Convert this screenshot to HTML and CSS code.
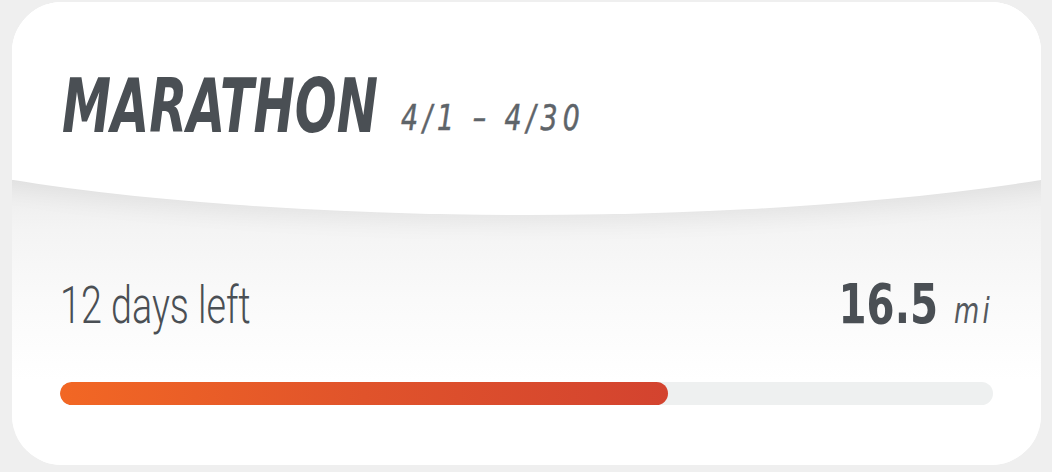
FILE: index.html
```html
<!DOCTYPE html>
<html lang="en">
<head>
<meta charset="utf-8">
<title>Marathon challenge</title>
<link rel="stylesheet" href="styles.css">
</head>
<body>
  <section class="card">
    <header class="card-head">
      <h1 class="title-row">
        <span class="title">MARATHON</span>
        <span class="dates">4/1 – 4/30</span>
      </h1>
    </header>
    <div class="card-body">
      <div class="stats">
        <span class="left">12 days left</span>
        <span class="dist"><span class="num">16.5</span><span class="unit">mi</span></span>
      </div>
      <div class="track"><div class="fill" style="width:65.2%"></div></div>
    </div>
  </section>
</body>
</html>
```
FILE: styles.css
```css
html, body {
  margin: 0;
  padding: 0;
}
body {
  width: 1052px;
  height: 472px;
  box-sizing: border-box;
  background: #efefef;
  padding: 2px 11px 0 12px;
  overflow: hidden;
}
.card {
  height: 463px;
  background: #fff;
  border-radius: 50px;
  overflow: hidden;
  display: flex;
  flex-direction: column;
  position: relative;
}
.card-head {
  height: 178px;
  flex: none;
  position: relative;
  z-index: 1;
  background: #fff;
  box-sizing: border-box;
  padding: 67px 0 0 50px;
}
.card-head::before {
  content: "";
  position: absolute;
  left: 50%;
  margin-left: -770px;
  width: 1540px;
  height: 274px;
  bottom: -35px;
  border-radius: 50%;
  background: #fff;
  box-shadow: 0 8px 24px rgba(0, 0, 0, 0.055);
  z-index: -1;
}
.title-row {
  margin: 0;
  display: flex;
  align-items: baseline;
  white-space: nowrap;
  font-family: "DejaVu Sans Condensed", "DejaVu Sans", sans-serif;
  font-style: italic;
}
.title {
  display: inline-block;
  font-size: 75px;
  line-height: 1;
  font-weight: 700;
  color: #4a4f54;
  transform: scaleX(0.73);
  transform-origin: left center;
  margin-right: -116px;
}
.dates {
  display: inline-block;
  margin-left: 22px;
  font-size: 35px;
  line-height: 1;
  font-weight: 400;
  letter-spacing: 5.9px;
  color: #5e6469;
  -webkit-text-stroke: 0.5px #5e6469;
  transform: scaleX(0.85);
  transform-origin: left center;
  position: relative;
  top: -2px;
}
.card-body {
  flex: 1;
  position: relative;
  z-index: 0;
  background: linear-gradient(to bottom, #ececec 0px, #f4f4f4 50px, #fafafa 120px, #fff 200px);
  padding: 0 48px;
  display: flex;
  flex-direction: column;
}
.stats {
  margin-top: 96px;
  display: flex;
  justify-content: space-between;
  align-items: baseline;
  white-space: nowrap;
}
.left {
  display: inline-block;
  font-family: Roboto, "DejaVu Sans", sans-serif;
  font-weight: 300;
  font-size: 52px;
  line-height: 1;
  color: #4a4f54;
  transform: scaleX(0.725);
  transform-origin: left center;
}
.dist {
  display: inline-flex;
  align-items: baseline;
  transform: scaleX(0.8);
  transform-origin: right center;
  font-family: "DejaVu Sans Condensed", "DejaVu Sans", sans-serif;
}
.num {
  font-size: 56px;
  line-height: 1;
  font-weight: 700;
  color: #4a4f54;
}
.unit {
  margin-left: 20px;
  font-size: 36px;
  line-height: 1;
  font-style: italic;
  font-weight: 400;
  letter-spacing: 4px;
  color: #55595e;
}
.track {
  margin-top: 50px;
  height: 23px;
  border-radius: 12px;
  background: #eef0f0;
  overflow: hidden;
}
.fill {
  height: 100%;
  border-radius: 12px;
  background: linear-gradient(to right, #f26724, #e0532b 50%, #d3432f);
}
```
